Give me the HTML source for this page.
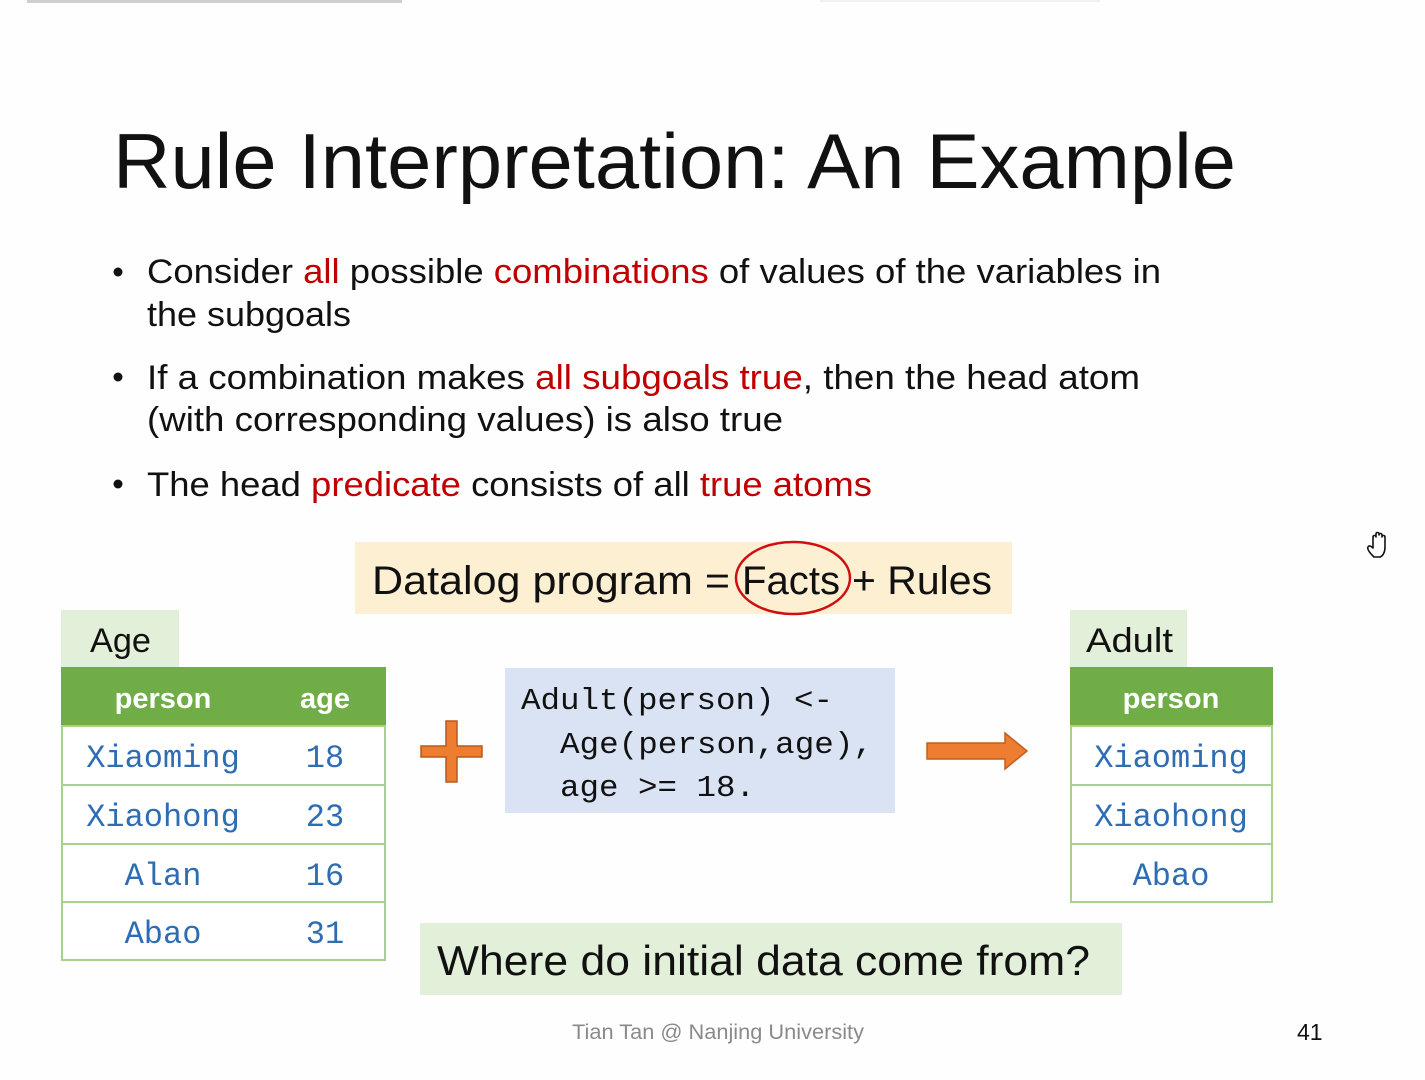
<!DOCTYPE html>
<html><head><meta charset="utf-8"><style>
html,body{margin:0;padding:0;background:#fff;}
svg{display:block;}
</style></head><body>
<svg width="1425" height="1080" viewBox="0 0 1425 1080" xmlns="http://www.w3.org/2000/svg">
<rect width="1425" height="1080" fill="#fefefe"/>
<rect x="27" y="0" width="375" height="3" fill="#cfcfcf"/>
<rect x="820" y="0" width="280" height="2" fill="#f1f1f1"/>
<g font-family="Liberation Sans, sans-serif" fill="#111">
<text x="113" y="188" font-size="78" textLength="1123" lengthAdjust="spacingAndGlyphs">Rule Interpretation: An Example</text>
<g font-size="34">
<circle cx="118" cy="272" r="4.5" fill="#111"/>
<text x="147" y="283" textLength="1014" lengthAdjust="spacingAndGlyphs">Consider <tspan fill="#c00000">all</tspan> possible <tspan fill="#c00000">combinations</tspan> of values of the variables in</text>
<text x="147" y="326" textLength="204" lengthAdjust="spacingAndGlyphs">the subgoals</text>
<circle cx="118" cy="377" r="4.5" fill="#111"/>
<text x="147" y="389" textLength="993" lengthAdjust="spacingAndGlyphs">If a combination makes <tspan fill="#c00000">all subgoals true</tspan>, then the head atom</text>
<text x="147" y="431" textLength="636" lengthAdjust="spacingAndGlyphs">(with corresponding values) is also true</text>
<circle cx="118" cy="484" r="4.5" fill="#111"/>
<text x="147" y="496" textLength="725" lengthAdjust="spacingAndGlyphs">The head <tspan fill="#c00000">predicate</tspan> consists of all <tspan fill="#c00000">true atoms</tspan></text>
</g>
<rect x="355" y="542" width="657" height="72" fill="#fcefd2"/>
<text y="594" font-size="40"><tspan x="372" textLength="358" lengthAdjust="spacingAndGlyphs">Datalog program =</tspan><tspan x="742" textLength="98" lengthAdjust="spacingAndGlyphs">Facts</tspan><tspan x="852" textLength="140" lengthAdjust="spacingAndGlyphs">+ Rules</tspan></text>
<ellipse cx="793" cy="578" rx="57" ry="36" fill="none" stroke="#d01010" stroke-width="2.5"/>
<rect x="61" y="610" width="118" height="57" fill="#e2efd9"/>
<text x="90" y="652" font-size="34" textLength="61" lengthAdjust="spacingAndGlyphs">Age</text>
<rect x="61" y="667" width="325" height="59" fill="#70ad47"/>
<text x="163" y="708" font-size="29" font-weight="bold" fill="#fff" text-anchor="middle">person</text>
<text x="325" y="708" font-size="29" font-weight="bold" fill="#fff" text-anchor="middle">age</text>
<g fill="#fff" stroke="#a9d08e" stroke-width="2">
<rect x="62" y="726" width="323" height="59"/>
<rect x="62" y="785" width="323" height="59"/>
<rect x="62" y="844" width="323" height="58"/>
<rect x="62" y="902" width="323" height="58"/>
</g>
<g font-family="Liberation Mono, monospace" font-size="32" fill="#2e6db4" text-anchor="middle">
<text x="163" y="767">Xiaoming</text><text x="325" y="767">18</text>
<text x="163" y="826">Xiaohong</text><text x="325" y="826">23</text>
<text x="163" y="885">Alan</text><text x="325" y="885">16</text>
<text x="163" y="943">Abao</text><text x="325" y="943">31</text>
</g>
<path d="M446 721h11v25h25v11h-25v25h-11v-25h-25v-11h25z" fill="#ed7d31" stroke="#b85a1c" stroke-width="1.5"/>
<rect x="505" y="668" width="390" height="145" fill="#dae3f3"/>
<g font-family="Liberation Mono, monospace" font-size="31" fill="#111">
<text x="521" y="709" textLength="312" lengthAdjust="spacingAndGlyphs">Adult(person) &lt;-</text>
<text x="560" y="753" textLength="313" lengthAdjust="spacingAndGlyphs">Age(person,age),</text>
<text x="560" y="796" textLength="195" lengthAdjust="spacingAndGlyphs">age &gt;= 18.</text>
</g>
<path d="M927 743h78v-10l22 18l-22 18v-10h-78z" fill="#ed7d31" stroke="#c0601f" stroke-width="1.5"/>
<rect x="1070" y="610" width="117" height="57" fill="#e2efd9"/>
<text x="1086" y="652" font-size="34" textLength="87" lengthAdjust="spacingAndGlyphs">Adult</text>
<rect x="1070" y="667" width="203" height="59" fill="#70ad47"/>
<text x="1171" y="708" font-size="29" font-weight="bold" fill="#fff" text-anchor="middle">person</text>
<g fill="#fff" stroke="#a9d08e" stroke-width="2">
<rect x="1071" y="726" width="201" height="59"/>
<rect x="1071" y="785" width="201" height="59"/>
<rect x="1071" y="844" width="201" height="58"/>
</g>
<g font-family="Liberation Mono, monospace" font-size="32" fill="#2e6db4" text-anchor="middle">
<text x="1171" y="767">Xiaoming</text>
<text x="1171" y="826">Xiaohong</text>
<text x="1171" y="885">Abao</text>
</g>
<rect x="420" y="923" width="702" height="72" fill="#e2efd9"/>
<text x="437" y="975" font-size="42" textLength="653" lengthAdjust="spacingAndGlyphs">Where do initial data come from?</text>
<text x="572" y="1039" font-size="21" fill="#8a8a8a" textLength="292" lengthAdjust="spacingAndGlyphs">Tian Tan @ Nanjing University</text>
<text x="1297" y="1040" font-size="23" fill="#111">41</text>
</g>
<path d="M1373 556c-3-3-6-7-5-9c1-2 3-1 5 1v-11c0-2 3-2 3 0v-3c0-2 3-2 3 0v1c0-2 3-2 3 0v2c0-2 3-2 3 0v10c0 5-2 9-5 10h-6z" fill="#fff" stroke="#111" stroke-width="1.6" stroke-linejoin="round"/>
</svg>
</body></html>
